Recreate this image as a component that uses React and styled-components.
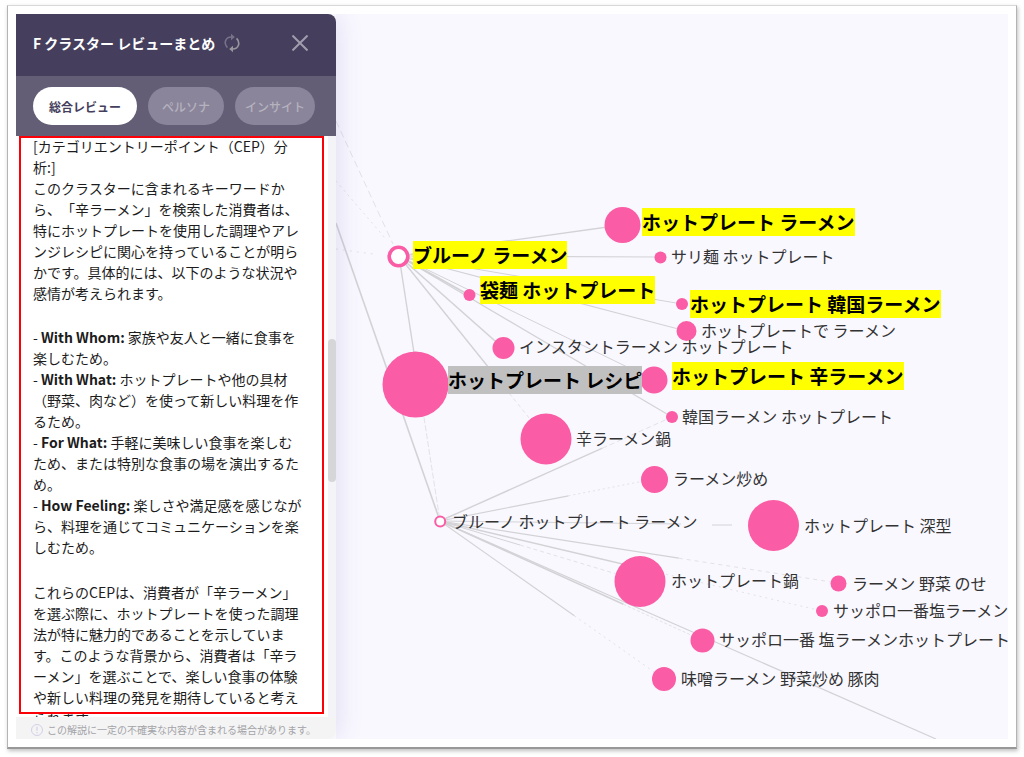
import styled, { createGlobalStyle } from "styled-components";

const pink = "#fa5ca5";

const hubA = [63, 242];
const hubB = [104, 507];

// solidTo: share of the edge that is drawn solid, the rest is dotted
const edges = [
  { from: [0, 209], to: hubB, solidTo: 1, width: 1.6 },
  { from: [0, 107], to: [57, 230], solidTo: 0, width: 1, dash: "7 4" },
  { from: [0, 167], to: [49, 224], solidTo: 0, width: 1, dash: "2 4" },
  { from: [0, 235], to: [37, 240], solidTo: 0, width: 1, dash: "2 5" },
  { from: hubA, to: [286, 211], solidTo: 1, width: 1.4 },
  { from: hubA, to: [324, 243], solidTo: 1, width: 1.2 },
  { from: hubA, to: [133, 281], solidTo: 1, width: 1.8 },
  { from: hubA, to: [346, 290], solidTo: 1, width: 1 },
  { from: hubA, to: [350, 317], solidTo: 1, width: 1.2 },
  { from: hubA, to: [167, 334], solidTo: 1, width: 1.6 },
  { from: hubA, to: [318, 366], solidTo: 1, width: 1 },
  { from: hubA, to: [336, 403], solidTo: 1, width: 1.2 },
  { from: hubA, to: [210, 425], solidTo: 0.66, width: 1.4, dash: "4 3" },
  { from: hubA, to: hubB, solidTo: 0.4, width: 1.4, dash: "6 2" },
  { from: hubB, to: [336, 403], solidTo: 0.7, width: 1.4, dash: "5 3" },
  { from: hubB, to: [318, 465], solidTo: 0.6, width: 1.2, dash: "2 3" },
  { from: hubB, to: [345, 510], solidTo: 1, width: 1 },
  { from: [376, 511], to: [396, 511], solidTo: 1, width: 1 },
  { from: hubB, to: [502, 569], solidTo: 0.6, width: 1.2, dash: "4 4" },
  { from: hubB, to: [486, 597], solidTo: 0.5, width: 1.4, dash: "2 4" },
  { from: hubB, to: [304, 567], solidTo: 0.4, width: 1, dash: "4 3" },
  { from: hubB, to: [366, 626], solidTo: 0.7, width: 1.6, dash: "3 2" },
  { from: hubB, to: [600, 725], solidTo: 1, width: 1.2 },
  { from: hubB, to: [328, 665], solidTo: 0.6, width: 1.2, dash: "2 4" },
];

const bubbles = [
  { cx: 286.5, cy: 211, r: 18 },
  { cx: 324.5, cy: 243.5, r: 6 },
  { cx: 133.5, cy: 281, r: 6 },
  { cx: 346, cy: 290, r: 6 },
  { cx: 350.5, cy: 317, r: 10 },
  { cx: 167.5, cy: 334, r: 11 },
  { cx: 79.5, cy: 370.5, r: 33 },
  { cx: 318, cy: 366, r: 13.5 },
  { cx: 336, cy: 403, r: 6 },
  { cx: 210, cy: 425, r: 25.5 },
  { cx: 318.5, cy: 465.5, r: 13.5 },
  { cx: 437.5, cy: 511.5, r: 25.5 },
  { cx: 304, cy: 567.5, r: 25.5 },
  { cx: 502.5, cy: 569.5, r: 8 },
  { cx: 486, cy: 597, r: 6 },
  { cx: 366.5, cy: 626.5, r: 12 },
  { cx: 328, cy: 665, r: 12 },
];

const labels = [
  { text: "サリ麺 ホットプレート", x: 335, y: 232 },
  { text: "ホットプレートで ラーメン", x: 365, y: 306 },
  { text: "インスタントラーメン ホットプレート", x: 183, y: 322 },
  { text: "韓国ラーメン ホットプレート", x: 346, y: 392 },
  { text: "辛ラーメン鍋", x: 240, y: 414 },
  { text: "ラーメン炒め", x: 337, y: 454 },
  { text: "ブルーノ ホットプレート ラーメン", x: 116, y: 497 },
  { text: "ホットプレート 深型", x: 468, y: 501 },
  { text: "ホットプレート鍋", x: 335, y: 556 },
  { text: "ラーメン 野菜 のせ", x: 516, y: 559 },
  { text: "サッポロ一番塩ラーメン", x: 497, y: 586 },
  { text: "サッポロ一番 塩ラーメンホットプレート", x: 383, y: 615 },
  { text: "味噌ラーメン 野菜炒め 豚肉", x: 345, y: 654 },
];

const marks = [
  { text: "ホットプレート ラーメン", x: 306, y: 194 },
  { text: "ブルーノ ラーメン", x: 77, y: 227 },
  { text: "袋麺 ホットプレート", x: 144, y: 262 },
  { text: "ホットプレート 韓国ラーメン", x: 354, y: 276 },
  { text: "ホットプレート 辛ラーメン", x: 336, y: 348 },
  { text: "ホットプレート レシピ", x: 112, y: 352, color: "#c0c0c0" },
];

const cepItems = [
  { name: "With Whom:", text: "家族や友人と一緒に食事を楽しむため。" },
  {
    name: "With What:",
    text: "ホットプレートや他の具材（野菜、肉など）を使って新しい料理を作るため。",
  },
  {
    name: "For What:",
    text: "手軽に美味しい食事を楽しむため、または特別な食事の場を演出するため。",
  },
  {
    name: "How Feeling:",
    text: "楽しさや満足感を感じながら、料理を通じてコミュニケーションを楽しむため。",
  },
];

const Edge = ({ from, to, solidTo, width, dash }) => {
  const mx = from[0] + (to[0] - from[0]) * solidTo;
  const my = from[1] + (to[1] - from[1]) * solidTo;
  return (
    <>
      {solidTo > 0 && (
        <line x1={from[0]} y1={from[1]} x2={mx} y2={my} stroke="#d3d3d6" strokeWidth={width} />
      )}
      {solidTo < 1 && (
        <line
          x1={mx}
          y1={my}
          x2={to[0]}
          y2={to[1]}
          stroke="#e2e2e7"
          strokeWidth="1"
          strokeDasharray={dash}
        />
      )}
    </>
  );
};

const KeywordMap = () => (
  <MapArea>
    <MapLines aria-hidden="true">
      {edges.map((edge, index) => (
        <Edge key={index} {...edge} />
      ))}
      {bubbles.map((bubble, index) => (
        <circle key={index} {...bubble} fill={pink} />
      ))}
      <circle cx="62.5" cy="242.5" r="9.3" fill="#fff" stroke={pink} strokeWidth="3.6" />
      <circle cx="104.2" cy="507.5" r="5" fill="#fff" stroke={pink} strokeWidth="2" />
    </MapLines>
    {labels.map(({ text, x, y }) => (
      <NodeLabel key={text} $x={x} $y={y}>
        {text}
      </NodeLabel>
    ))}
    {marks.map(({ text, x, y, color }) => (
      <MarkedLabel key={text} $x={x} $y={y} $color={color}>
        {text}
      </MarkedLabel>
    ))}
  </MapArea>
);

const ReviewPanel = () => (
  <Panel>
    <PanelHeader>
      <Title>F クラスター レビューまとめ</Title>
      <IconButton aria-label="更新">
        <svg width="16" height="20" viewBox="0 0 16 20" fill="none" strokeWidth="1.6">
          <path d="M3.400 14.600C-.6 10.400 1.200 4 7.500 4" stroke="#77728a" />
          <path d="M7 .8 10.800 4 7 7.200Z" fill="#77728a" />
          <path d="M12.600 5.400C16.600 9.600 14.800 16 8.500 16" stroke="#99969c" />
          <path d="M9 12.800 5.200 16 9 19.200Z" fill="#99969c" />
        </svg>
      </IconButton>
      <CloseButton aria-label="閉じる">
        <svg width="16" height="16" viewBox="0 0 16 16" stroke="#a19dae" strokeWidth="2">
          <path d="M.5.5 15.500 15.500M15.500.5.5 15.500" />
        </svg>
      </CloseButton>
    </PanelHeader>
    <TabBar>
      <Tab $active $pad={16}>総合レビュー</Tab>
      <Tab $pad={14}>ペルソナ</Tab>
      <Tab $pad={10}>インサイト</Tab>
    </TabBar>
    <PanelBody>
      <Review>
        <Paragraph>
          [カテゴリエントリーポイント（CEP）分析:]
          <br />
          このクラスターに含まれるキーワードから、「辛ラーメン」を検索した消費者は、特にホットプレートを使用した調理やアレンジレシピに関心を持っていることが明らかです。具体的には、以下のような状況や感情が考えられます。
        </Paragraph>
        <CepList>
          {cepItems.map(({ name, text }) => (
            <li key={name}>
              - <b>{name}</b> {text}
            </li>
          ))}
        </CepList>
        <Paragraph>
          これらのCEPは、消費者が「辛ラーメン」を選ぶ際に、ホットプレートを使った調理法が特に魅力的であることを示しています。このような背景から、消費者は「辛ラーメン」を選ぶことで、楽しい食事の体験や新しい料理の発見を期待していると考えられます。
        </Paragraph>
      </Review>
      <ScrollTrack>
        <ScrollThumb />
      </ScrollTrack>
      <RedFrame />
    </PanelBody>
    <PanelFooter>
      <svg width="12" height="12" viewBox="0 0 12 12" fill="none" stroke="#d3cfe6">
        <circle cx="6" cy="6" r="5.500" />
        <path d="M6 2.800V6.800M6 8V9.300" strokeWidth="1.200" />
      </svg>
      この解説に一定の不確実な内容が含まれる場合があります。
    </PanelFooter>
  </Panel>
);

export default function App() {
  return (
    <>
      <GlobalStyle />
      <Page>
        <Frame>
          <ReviewPanel />
          <KeywordMap />
        </Frame>
      </Page>
    </>
  );
}

const GlobalStyle = createGlobalStyle`
  * {
    box-sizing: border-box;
  }

  body {
    margin: 0;
    background: #ffffff;
    font-family: "Noto Sans CJK JP", sans-serif;
    text-spacing-trim: space-all;
  }
`;

const Page = styled.div`
  display: flex;
  height: 100vh;
  padding: 5px 7px 8px;
`;

const Frame = styled.main`
  flex: 1;
  display: flex;
  min-width: 0;
  padding: 8px;
  background: #ffffff;
  border: 1px solid #d8d8d8;
  border-left-color: #b4b4b4;
  border-right-color: #b4b4b4;
  border-bottom: 2px solid #989898;
  box-shadow: 1px 2px 4px rgba(0, 0, 0, 0.25);
`;

const Panel = styled.aside`
  position: relative;
  z-index: 1;
  flex: none;
  display: flex;
  flex-direction: column;
  width: 320px;
  border-radius: 0 8px 8px 0;
  background: #ffffff;
  box-shadow: 4px 0 24px rgba(80, 60, 160, 0.12);
  clip-path: inset(0 -32px 0 0);
`;

const PanelHeader = styled.header`
  display: flex;
  align-items: center;
  height: 62px;
  padding: 0 24px 4px 17px;
  background: #453f5d;
  border-radius: 0 8px 0 0;
`;

const Title = styled.h1`
  margin: 0;
  font-size: 14px;
  line-height: 20px;
  font-weight: 700;
  color: #ffffff;
`;

const IconButton = styled.button`
  display: flex;
  padding: 0;
  margin-left: 9px;
  border: 0;
  background: none;
  cursor: pointer;
`;

const CloseButton = styled(IconButton)`
  margin-left: auto;
  padding: 4px;
`;

const TabBar = styled.nav`
  display: flex;
  align-items: center;
  gap: 11px;
  height: 60px;
  padding: 0 17px;
  background: #635e76;
`;

const Tab = styled.button`
  height: 38px;
  padding: 0 ${({ $pad }) => $pad}px;
  border: 0;
  border-radius: 19px;
  font-family: inherit;
  font-size: 12px;
  font-weight: ${({ $active }) => ($active ? 700 : 500)};
  color: ${({ $active }) => ($active ? "#453f5d" : "#b5b2be")};
  background: ${({ $active }) => ($active ? "#ffffff" : "#8a859b")};
  cursor: pointer;
`;

const PanelBody = styled.div`
  position: relative;
  flex: 1;
  display: flex;
  min-height: 0;
`;

const Review = styled.div`
  flex: 1;
  overflow: hidden;
  padding: 0 24px 0 17px;
  font-size: 14px;
  line-height: 21px;
  color: #1c1c1c;
`;

const Paragraph = styled.p`
  margin: 0;
`;

const CepList = styled.ul`
  margin: 23px 0 24px;
  padding: 0;
  list-style: none;
`;

const ScrollTrack = styled.div`
  width: 8px;
  background: #f4f4f8;
`;

const ScrollThumb = styled.div`
  height: 143px;
  margin-top: 203px;
  border-radius: 4px;
  background: #d6d6d8;
`;

/* sits over the review text */
const RedFrame = styled.div`
  position: absolute;
  inset: 0 12px 3px 3px;
  border: 2px solid #fb0007;
  pointer-events: none;
`;

const PanelFooter = styled.footer`
  display: flex;
  align-items: center;
  gap: 4px;
  height: 22px;
  padding: 3px 15px 0;
  font-size: 10px;
  line-height: 16px;
  white-space: nowrap;
  color: #a3a3a8;
  background: #f4f4f4;
  border-radius: 0 0 8px 0;
`;

const MapArea = styled.section`
  position: relative;
  flex: 1;
  min-width: 0;
  overflow: hidden;
  background: #f9f8ff;
`;

const MapLines = styled.svg`
  display: block;
  width: 100%;
  height: 100%;
`;

const NodeLabel = styled.span`
  position: absolute;
  left: ${({ $x }) => $x}px;
  top: ${({ $y }) => $y}px;
  font-size: 16px;
  line-height: 20px;
  white-space: nowrap;
  color: #333333;
`;

const MarkedLabel = styled(NodeLabel)`
  font-size: 19px;
  line-height: 28px;
  font-weight: 700;
  color: #000000;
  background: ${({ $color }) => $color || "#ffff00"};
`;
